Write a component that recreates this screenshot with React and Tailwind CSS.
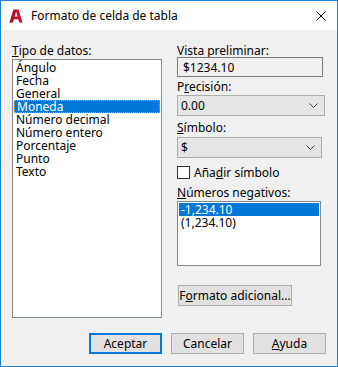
const tipos = ["Ángulo", "Fecha", "General", "Moneda", "Número decimal", "Número entero", "Porcentaje", "Punto", "Texto"];

function Chevron() {
  return (
    <svg width="9" height="5" viewBox="0 0 9 5">
      <path d="M0.5 0.5 L4.5 4.5 L8.5 0.5" fill="none" stroke="#3c3c3c" strokeWidth="1" />
    </svg>
  );
}

function Select({ value, w }) {
  return (
    <div className={`flex h-[21px] items-center justify-between border border-[#adadad] bg-[#e5e5e5] pl-[3px] pr-[6px] ${w}`}>
      <span>{value}</span>
      <Chevron />
    </div>
  );
}

function Btn({ children, focus, w = "w-[73px]" }) {
  return (
    <div
      className={`flex h-[21px] items-center justify-center bg-[#e1e1e1] ${w} ${
        focus ? "border-2 border-[#0078d7]" : "border border-[#adadad]"
      }`}
    >
      {children}
    </div>
  );
}

export default function App() {
  return (
    <div
      className="flex h-[367px] w-[338px] flex-col border border-[#1883d7] bg-[#f0f0f0] text-[12px] leading-[13px] text-black"
      style={{ fontFamily: '"Noto Sans", sans-serif' }}
    >
      {/* Title bar */}
      <div className="flex h-[29px] shrink-0 items-center bg-white">
        <svg width="14" height="14" viewBox="0 0 14 14" className="ml-[8px]">
          <path d="M4.5 0.5 H9.5 L13.5 13.5 H10.2 L9.3 10.2 H4.7 L3.8 13.5 H0.5 Z" fill="#c8102e" />
          <path d="M5.5 7.6 H8.6 L7 2.6 Z" fill="#fff" />
          <path d="M4.5 0.5 L0.5 13.5 H3.8 L7 2.6 Z" fill="#9b0d22" opacity="0.6" />
        </svg>
        <span className="ml-[8px]">Formato de celda de tabla</span>
        <svg width="10" height="10" viewBox="0 0 10 10" className="ml-auto mr-[11px]">
          <path d="M0.5 0.5 L9.5 9.5 M9.5 0.5 L0.5 9.5" stroke="#000" strokeWidth="1" />
        </svg>
      </div>

      {/* Body */}
      <div className="flex flex-1 flex-col px-[11px] pt-[14px]">
        <div className="flex gap-[15px]">
          {/* Left column */}
          <div className="flex w-[150px] flex-col">
            <div className="h-[13px]">
              <u>T</u>ipo de datos:
            </div>
            <div className="mt-[2px] h-[259px] border border-[#828790] bg-white px-[1px] pt-[1px]">
              {tipos.map((t) => (
                <div
                  key={t}
                  className={`h-[13px] pl-[2px] ${
                    t === "Moneda" ? "border border-dotted border-[#f0a030] bg-[#0078d7] pl-[1px] leading-[11px] text-white" : ""
                  }`}
                >
                  {t}
                </div>
              ))}
            </div>
          </div>

          {/* Right column */}
          <div className="flex w-[148px] flex-col">
            <div className="h-[13px]">Vista preliminar:</div>
            <div className="flex h-[20px] w-[146px] items-center border border-[#7a7a7a] bg-[#f0f0f0] pl-[5px]">
              $1234.10
            </div>
            <div className="mt-[3px] h-[13px]">
              P<u>r</u>ecisión:
            </div>
            <div className="mt-[2px]">
              <Select value="0.00" w="w-[148px]" />
            </div>
            <div className="mt-[5px] h-[13px]">
              <u>S</u>ímbolo:
            </div>
            <div className="mt-[3px]">
              <Select value="$" w="w-[145px]" />
            </div>
            <div className="mt-[8px] flex h-[13px] items-center gap-[4px]">
              <div className="h-[13px] w-[13px] border border-[#333] bg-white" />
              <span>
                Aña<u>d</u>ir símbolo
              </span>
            </div>
            <div className="mt-[7px] h-[13px]">
              <u>N</u>úmeros negativos:
            </div>
            <div className="mt-[2px] h-[65px] w-[144px] border border-[#828790] bg-white px-[1px] pt-[1px]">
              <div className="h-[13px] bg-[#0078d7] pl-[2px] text-white">-1,234.10</div>
              <div className="h-[13px] pl-[2px]">(1,234.10)</div>
            </div>
            <div className="mt-[19px] pl-[1px]">
              <Btn w="w-[114px]">
                F<u>o</u>rmato adicional...
              </Btn>
            </div>
          </div>
        </div>

        {/* Footer buttons */}
        <div className="mt-[15px] flex justify-end gap-[9px]">
          <Btn focus>Aceptar</Btn>
          <Btn>Cancelar</Btn>
          <Btn>
            <u>A</u>yuda
          </Btn>
        </div>
      </div>
    </div>
  );
}
